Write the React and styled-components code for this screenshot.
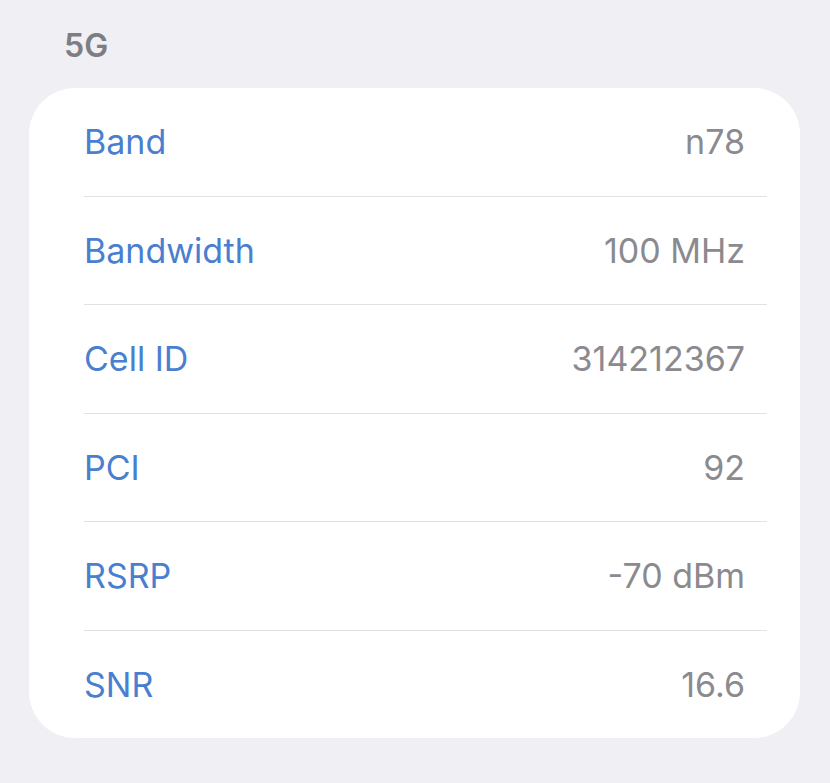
import React from 'react';
import styled, { createGlobalStyle } from 'styled-components';

const GlobalStyle = createGlobalStyle`
  html, body {
    margin: 0;
    padding: 0;
    background: #efeff4;
  }
  body {
    font-family: Inter, "Noto Sans", "Liberation Sans", sans-serif;
    -webkit-font-smoothing: antialiased;
  }
`;

const Page = styled.div`
  width: 830px;
  height: 783px;
  box-sizing: border-box;
  padding: 27px 30px 0 29px;
  background: #efeff4;
`;

const SectionTitle = styled.h2`
  margin: 0 0 0 35px;
  height: 61px;
  font-size: 32px;
  font-weight: 600;
  line-height: 38px;
  color: #7d7d82;
`;

const Card = styled.div`
  background: #ffffff;
  border-radius: 46px;
  overflow: hidden;
  display: flex;
  flex-direction: column;
`;

const Row = styled.div`
  height: 107.5px;
  margin: 0 33px 0 55px;
  display: flex;
  align-items: center;
  justify-content: space-between;
  border-top: ${p => (p.$first ? 'none' : '1.5px solid #e1e1e6')};
`;

const Label = styled.span`
  font-size: 34px;
  color: #4a7fd0;
`;

const Value = styled.span`
  font-size: 34px;
  color: #8a8a8f;
  margin-right: 22px;
`;

const rows = [
  ['Band', 'n78'],
  ['Bandwidth', '100 MHz'],
  ['Cell ID', '314212367'],
  ['PCI', '92'],
  ['RSRP', '-70 dBm'],
  ['SNR', '16.6'],
];

export default function App() {
  return (
    <>
      <GlobalStyle />
      <Page>
        <SectionTitle>5G</SectionTitle>
        <Card>
          {rows.map(([label, value], i) => (
            <Row key={label} $first={i === 0}>
              <Label>{label}</Label>
              <Value>{value}</Value>
            </Row>
          ))}
        </Card>
      </Page>
    </>
  );
}
